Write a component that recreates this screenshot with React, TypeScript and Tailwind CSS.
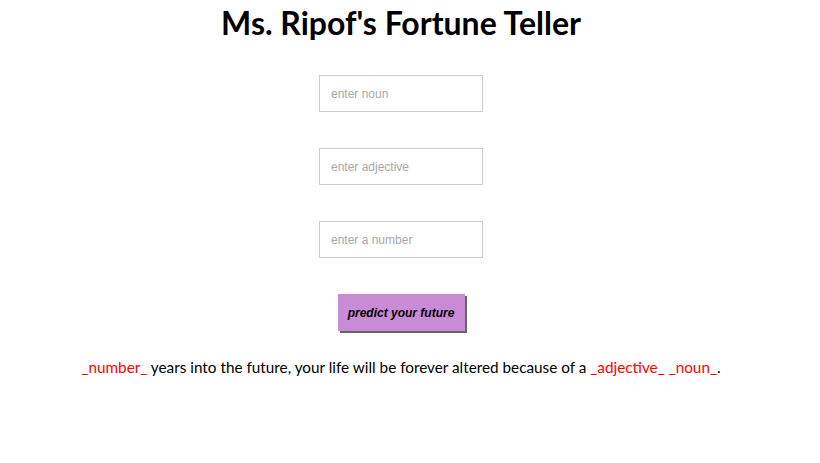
import React from "react";

export default function App() {
  const inputCls =
    "w-[164px] h-[37px] border border-[#cccccc] bg-white px-[11px] text-[12px] outline-none placeholder:text-[#a9a9a9] [font-family:'Liberation_Sans',Arial,sans-serif]";
  return (
    <div className="w-[802px] min-h-[463px] bg-white flex flex-col items-center text-black [font-family:Lato,'Noto_Sans',sans-serif]">
      <h1 className="mt-[4px] text-[32px] leading-[38px] font-bold text-black">Ms. Ripof's Fortune Teller</h1>
      <input className={`${inputCls} mt-[33px]`} placeholder="enter noun" />
      <input className={`${inputCls} mt-[36px]`} placeholder="enter adjective" />
      <input className={`${inputCls} mt-[36px]`} placeholder="enter a number" />
      <button className="mt-[36px] w-[127px] h-[37px] bg-[#c98bd6] shadow-[2px_2px_0_#666666] text-[12px] font-bold italic text-black [font-family:'Liberation_Sans',Arial,sans-serif]">
        predict your future
      </button>
      <p className="mt-[25px] text-[15.3px] leading-[22px]">
        <span className="text-[#ff0000]">_number_</span> years into the future, your life will be forever altered because of a{" "}
        <span className="text-[#ff0000]">_adjective_</span> <span className="text-[#ff0000]">_noun_</span>.
      </p>
    </div>
  );
}
